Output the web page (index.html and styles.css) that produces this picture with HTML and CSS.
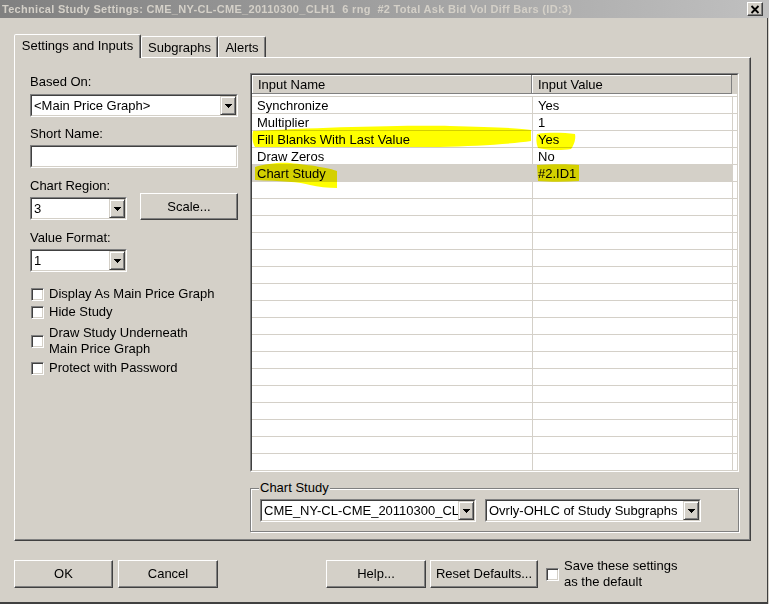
FILE: index.html
```html
<!DOCTYPE html>
<html>
<head>
<meta charset="utf-8">
<title>Technical Study Settings</title>
<link rel="stylesheet" href="styles.css">
</head>
<body>
<div class="window">
  <div class="titlebar">
    <span class="title">Technical Study Settings: CME_NY-CL-CME_20110300_CLH1  6 rng  #2 Total Ask Bid Vol Diff Bars (ID:3)</span>
    <span class="close"><svg width="10" height="9" viewBox="0 0 10 9"><path d="M1.5 1 L8.5 8 M8.5 1 L1.5 8" stroke="#000" stroke-width="1.8" fill="none"/></svg></span>
  </div>
  <div class="main">
    <div class="tabs">
      <div class="tab active w1">Settings and Inputs</div>
      <div class="tab w2">Subgraphs</div>
      <div class="tab w3">Alerts</div>
    </div>
    <div class="panel">
      <div class="left">
        <div class="lbl">Based On:</div>
        <div class="combo wide m5">
          <div class="combo-in"><span class="ctext">&lt;Main Price Graph&gt;</span><span class="dd"><svg width="7" height="4" viewBox="0 0 7 4"><path d="M0 0h7v1h-1v1h-1v1h-1v1h-1v-1h-1v-1h-1v-1h-1z" fill="#000"/></svg></span></div>
        </div>
        <div class="lbl m8">Short Name:</div>
        <div class="field m4"><div class="field-in"></div></div>
        <div class="lbl m9">Chart Region:</div>
        <div class="region-row">
          <div class="combo narrow m4">
            <div class="combo-in"><span class="ctext">3</span><span class="dd"><svg width="7" height="4" viewBox="0 0 7 4"><path d="M0 0h7v1h-1v1h-1v1h-1v1h-1v-1h-1v-1h-1v-1h-1z" fill="#000"/></svg></span></div>
          </div>
          <div class="btn scale">Scale...</div>
        </div>
        <div class="lbl m9">Value Format:</div>
        <div class="combo narrow m4">
          <div class="combo-in"><span class="ctext">1</span><span class="dd"><svg width="7" height="4" viewBox="0 0 7 4"><path d="M0 0h7v1h-1v1h-1v1h-1v1h-1v-1h-1v-1h-1v-1h-1z" fill="#000"/></svg></span></div>
        </div>
        <div class="chkrow r1"><span class="chk"></span><span>Display As Main Price Graph</span></div>
        <div class="chkrow"><span class="chk"></span><span>Hide Study</span></div>
        <div class="chkrow r3"><span class="chk"></span><span>Draw Study Underneath<br>Main Price Graph</span></div>
        <div class="chkrow r4"><span class="chk"></span><span>Protect with Password</span></div>
      </div>
      <div class="right">
        <div class="grid">
          <div class="grid-in">
            <div class="ghead">
              <div class="hc hname">Input Name</div>
              <div class="hc hval">Input Value</div>
              <div class="hfill"></div>
            </div>
            <div class="rows">
              <div class="row"><div class="c">Synchronize</div><div class="c">Yes</div><div class="f"></div></div>
              <div class="row"><div class="c">Multiplier</div><div class="c">1</div><div class="f"></div></div>
              <div class="row"><div class="c">Fill Blanks With Last Value</div><div class="c">Yes</div><div class="f"></div></div>
              <div class="row"><div class="c">Draw Zeros</div><div class="c">No</div><div class="f"></div></div>
              <div class="row sel"><div class="c">Chart Study</div><div class="c">#2.ID1</div><div class="f"></div></div>
              <div class="row"><div class="c"></div><div class="c"></div><div class="f"></div></div>
              <div class="row"><div class="c"></div><div class="c"></div><div class="f"></div></div>
              <div class="row"><div class="c"></div><div class="c"></div><div class="f"></div></div>
              <div class="row"><div class="c"></div><div class="c"></div><div class="f"></div></div>
              <div class="row"><div class="c"></div><div class="c"></div><div class="f"></div></div>
              <div class="row"><div class="c"></div><div class="c"></div><div class="f"></div></div>
              <div class="row"><div class="c"></div><div class="c"></div><div class="f"></div></div>
              <div class="row"><div class="c"></div><div class="c"></div><div class="f"></div></div>
              <div class="row"><div class="c"></div><div class="c"></div><div class="f"></div></div>
              <div class="row"><div class="c"></div><div class="c"></div><div class="f"></div></div>
              <div class="row"><div class="c"></div><div class="c"></div><div class="f"></div></div>
              <div class="row"><div class="c"></div><div class="c"></div><div class="f"></div></div>
              <div class="row"><div class="c"></div><div class="c"></div><div class="f"></div></div>
              <div class="row"><div class="c"></div><div class="c"></div><div class="f"></div></div>
              <div class="row"><div class="c"></div><div class="c"></div><div class="f"></div></div>
              <div class="row"><div class="c"></div><div class="c"></div><div class="f"></div></div>
              <div class="row"><div class="c"></div><div class="c"></div><div class="f"></div></div>
            </div>
          </div>
          <svg class="marks" width="489" height="399" viewBox="0 0 489 399">
            <path d="M3 58 C 60 55, 150 52, 200 53 C 240 54, 270 55, 281 57 L 281 68 C 262 71, 225 73, 190 74 L 5 74 C 2 70, 2 62, 3 58 Z"/>
            <path d="M287 61 C 300 59, 315 60, 325 61 C 326 66, 324 72, 321 76 C 310 78, 296 77, 288 75 C 286 70, 286 65, 287 61 Z"/>
            <path d="M5 94 C 15 91, 30 89, 40 90 C 60 92, 80 95, 87 98 L 87 115 C 78 115, 68 114, 60 112 C 50 109, 30 108, 5 107 Z"/>
            <path d="M287 92 C 300 91, 320 91, 329 92 L 329 108 C 315 109, 300 109, 288 108 Z"/>
          </svg>
        </div>
        <div class="group">
          <span class="glabel">Chart Study</span>
          <div class="combo gcombo">
            <div class="combo-in"><span class="ctext">CME_NY-CL-CME_20110300_CL</span><span class="dd"><svg width="7" height="4" viewBox="0 0 7 4"><path d="M0 0h7v1h-1v1h-1v1h-1v1h-1v-1h-1v-1h-1v-1h-1z" fill="#000"/></svg></span></div>
          </div>
          <div class="combo gcombo">
            <div class="combo-in"><span class="ctext">Ovrly-OHLC of Study Subgraphs</span><span class="dd"><svg width="7" height="4" viewBox="0 0 7 4"><path d="M0 0h7v1h-1v1h-1v1h-1v1h-1v-1h-1v-1h-1v-1h-1z" fill="#000"/></svg></span></div>
          </div>
        </div>
      </div>
    </div>
    <div class="footer">
      <div class="btn ok">OK</div>
      <div class="btn cancel">Cancel</div>
      <div class="btn help">Help...</div>
      <div class="btn reset">Reset Defaults...</div>
      <span class="chk save"></span>
      <span class="savetext">Save these settings<br>as the default</span>
    </div>
  </div>
</div>
</body>
</html>
```
FILE: styles.css
```css
* { box-sizing: border-box; }
html, body { margin: 0; padding: 0; }
body {
  width: 769px; height: 604px; overflow: hidden;
  background: #d4d0c8;
  font-family: "Liberation Sans", Arial, sans-serif;
  font-size: 13px; line-height: 16px; color: #000;
}
.window { width: 769px; height: 604px; display: flex; flex-direction: column; }
.titlebar {
  height: 18px; flex: none; display: flex; align-items: center;
  background: linear-gradient(to right, #808080, #c0c0c0);
}
.title {
  font-weight: bold; font-size: 11px; line-height: 18px; color: #d4d0c8;
  padding-left: 2px; white-space: pre; letter-spacing: 0.3px;
}
.close {
  margin-left: auto; margin-right: 6px; width: 16px; height: 14px;
  background: #d4d0c8; border: 1px solid; border-color: #fff #404040 #404040 #fff;
  box-shadow: inset -1px -1px 0 #808080;
  display: flex; align-items: center; justify-content: center;
}
.close svg { display: block; }
.main {
  flex: 1; padding: 16px 0 0 14px;
  border-right: 1px solid #404040; margin-right: 1px;
  border-bottom: 2px solid #404040;
}
.tabs { display: flex; align-items: flex-end; height: 23px; position: relative; z-index: 1; }
.tab {
  height: 21px; padding-top: 3px; text-align: center; background: #d4d0c8;
  border: 1px solid; border-bottom: none; border-color: #fff #404040 transparent #fff;
  box-shadow: inset -1px 0 0 #808080; border-radius: 2px 2px 0 0;
}
.tab.active { height: 24px; margin-bottom: -1px; }
.w1 { width: 127px; }
.w2 { width: 77px; }
.w3 { width: 48px; }
.panel {
  width: 737px; height: 484px; display: flex; gap: 12px;
  padding: 15px 0 0 15px;
  border: 1px solid; border-color: #fff #404040 #404040 #fff;
  box-shadow: inset -1px -1px 0 #808080;
}
.left { width: 208px; flex: none; display: flex; flex-direction: column; align-items: flex-start; }
.lbl { height: 16px; padding-top: 1px; }
.m4 { margin-top: 4px; }
.m5 { margin-top: 5px; }
.m8 { margin-top: 8px; }
.m9 { margin-top: 9px; }

.combo, .field {
  height: 23px; background: #fff;
  border: 1px solid; border-color: #808080 #fff #fff #808080;
}
.combo-in, .field-in {
  height: 100%; border: 1px solid; border-color: #404040 #d4d0c8 #d4d0c8 #404040;
  display: flex; align-items: center;
}
.ctext { flex: 1; min-width: 0; overflow: hidden; white-space: nowrap; padding-left: 2px; }
.dd {
  flex: none; width: 16px; height: 19px; background: #d4d0c8;
  border: 1px solid; border-color: #d4d0c8 #404040 #404040 #d4d0c8;
  box-shadow: inset 1px 1px 0 #fff, inset -1px -1px 0 #808080;
  display: flex; align-items: center; justify-content: center;
}
.dd svg { display: block; }
.wide { width: 208px; }
.field { width: 208px; }
.narrow { width: 97px; }
.region-row { display: flex; align-items: flex-start; gap: 13px; }

.btn {
  display: flex; align-items: center; justify-content: center;
  background: #d4d0c8; border: 1px solid; border-color: #fff #404040 #404040 #fff;
  box-shadow: inset -1px -1px 0 #808080;
}
.scale { width: 98px; height: 27px; }

.chk {
  flex: none; width: 13px; height: 13px; background: #fff;
  border: 1px solid; border-color: #808080 #fff #fff #808080;
  box-shadow: inset 1px 1px 0 #404040, inset -1px -1px 0 #d4d0c8;
}
.chkrow { display: flex; align-items: center; gap: 5px; height: 18px; padding-left: 1px; }
.r1 { margin-top: 13px; }
.r3 { margin-top: 3px; height: 34px; }
.r4 { margin-top: 1px; }

.right { width: 489px; flex: none; }
.grid {
  position: relative; width: 489px; height: 399px; background: #fff;
  border: 1px solid; border-color: #808080 #fff #fff #808080;
}
.grid-in {
  height: 100%; border: 1px solid; border-color: #404040 #d4d0c8 #d4d0c8 #404040;
}
.ghead { display: flex; height: 19px; background: #d4d0c8; }
.hc {
  height: 19px; padding: 2px 0 0 6px;
  border-right: 1px solid #808080; border-bottom: 1px solid #808080;
  box-shadow: inset 1px 1px 0 #fff;
}
.hname { width: 280px; }
.hval { width: 200px; }
.hfill { flex: 1; }
.rows { padding-top: 2px; }
.row {
  display: grid; grid-template-columns: 281px 200px 1fr;
  height: 17px; border-top: 1px solid #d4d0c8;
}
.c { border-right: 1px solid #d4d0c8; padding-left: 5px; white-space: nowrap; overflow: hidden; line-height: 17px; }
.row.sel .c { background: #d4d0c8; }
.marks {
  position: absolute; left: -1px; top: -1px; pointer-events: none;
  mix-blend-mode: multiply;
}
.marks path { fill: #ffff00; }

.group {
  position: relative; margin-top: 16px; width: 489px; height: 44px;
  display: flex; gap: 9px; padding: 10px 8px 0 9px;
  border: 1px solid #808080;
  box-shadow: 1px 1px 0 #fff, inset 1px 1px 0 #fff;
}
.glabel {
  position: absolute; left: 8px; top: -9px; padding: 0 1px;
  background: #d4d0c8; line-height: 16px;
}
.gcombo { width: 216px; }

.footer { display: flex; align-items: center; margin-top: 17px; }
.footer .btn { height: 28px; }
.ok { width: 99px; }
.cancel { width: 100px; margin-left: 5px; }
.help { width: 100px; margin-left: 108px; }
.reset { width: 108px; margin-left: 4px; }
.save { margin-left: 8px; }
.savetext { margin-left: 5px; }
```
